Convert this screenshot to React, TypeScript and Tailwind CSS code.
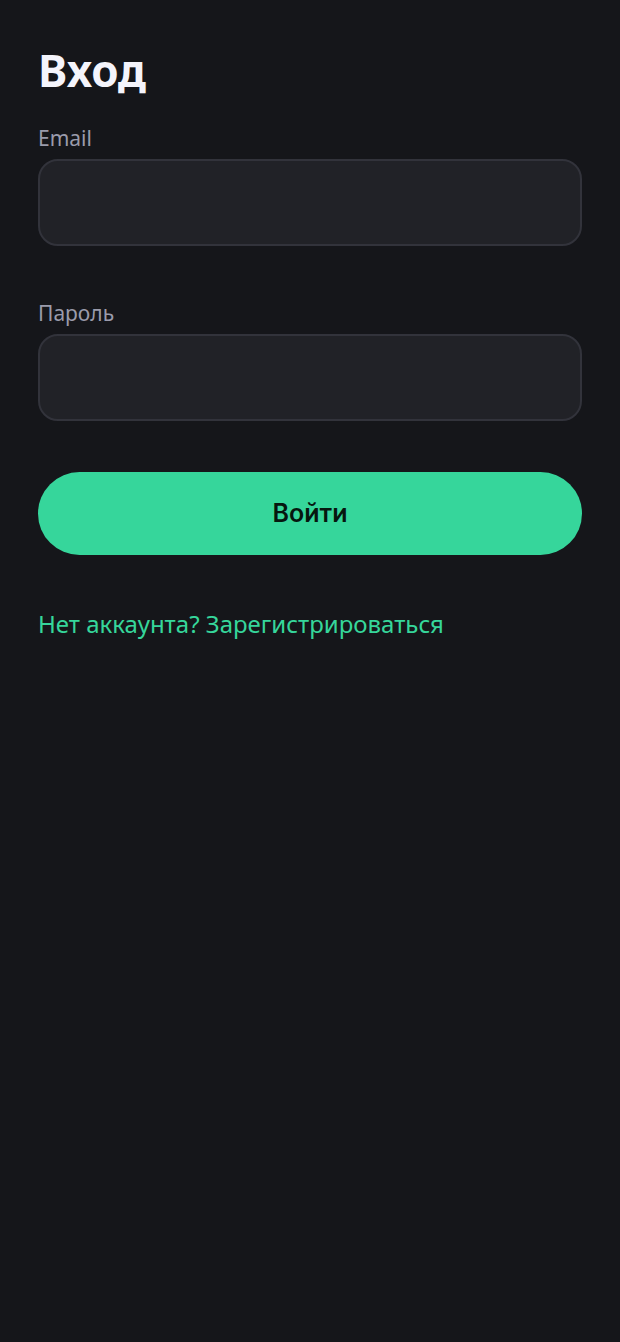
import { useState } from 'react';

function App() {
  const [email, setEmail] = useState('');
  const [password, setPassword] = useState('');

  return (
    <div className="min-h-screen bg-[#15161a] px-[38px] pt-10 font-['Noto_Sans',sans-serif] text-[#f4f4fb]">
      <h1 className="text-[44px] leading-[60px] font-bold">Вход</h1>

      <form className="mt-6 flex flex-col" onSubmit={(e) => e.preventDefault()}>
        <label htmlFor="email" className="text-[21px] leading-[28px] text-[#9a9bab]">
          Email
        </label>
        <input
          id="email"
          type="email"
          value={email}
          onChange={(e) => setEmail(e.target.value)}
          className="mt-[7px] h-[87px] w-full rounded-[20px] border-2 border-[#32333b] bg-[#212227] px-6 text-[26px] focus:outline-none focus:border-[#36d69b]"
        />

        <label htmlFor="password" className="mt-[53px] text-[21px] leading-[28px] text-[#9a9bab]">
          Пароль
        </label>
        <input
          id="password"
          type="password"
          value={password}
          onChange={(e) => setPassword(e.target.value)}
          className="mt-[7px] h-[87px] w-full rounded-[20px] border-2 border-[#32333b] bg-[#212227] px-6 text-[26px] focus:outline-none focus:border-[#36d69b]"
        />

        <button
          type="submit"
          className="mt-[51px] h-[83px] w-full rounded-full bg-[#36d69b] font-['Inter',sans-serif] text-[25px] font-semibold text-[#06170f]"
        >
          Войти
        </button>
      </form>

      <a href="#register" className="mt-[51px] inline-block text-[24px] leading-[36px] text-[#36d69b]">
        Нет аккаунта? Зарегистрироваться
      </a>
    </div>
  );
}

export default App;
